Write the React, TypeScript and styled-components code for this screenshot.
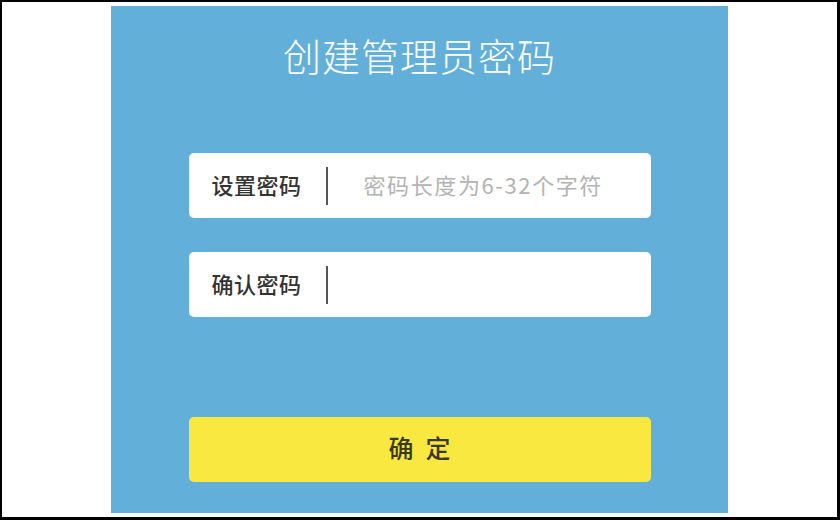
import React from 'react';
import styled, { createGlobalStyle } from 'styled-components';

const GlobalStyle = createGlobalStyle`
  html, body {
    margin: 0;
    padding: 0;
    background: #ffffff;
  }
  body {
    font-family: 'Noto Sans CJK SC', 'Noto Sans', sans-serif;
  }
`;

const Frame = styled.div`
  box-sizing: border-box;
  width: 840px;
  height: 520px;
  border-style: solid;
  border-color: #000000;
  border-width: 2px 3px 3px 2px;
  background: #ffffff;
  display: flex;
  justify-content: center;
  padding-top: 4px;
`;

const Panel = styled.div`
  width: 617px;
  height: 507px;
  background: #62b0d9;
  display: flex;
  flex-direction: column;
  align-items: center;
`;

const Title = styled.h1`
  margin: 26px 0 0;
  height: 46px;
  line-height: 46px;
  font-size: 38px;
  font-weight: 300;
  color: #ffffff;
  letter-spacing: 1px;
`;

const Field = styled.label<{ $top: number }>`
  box-sizing: border-box;
  width: 462px;
  height: 65px;
  margin-top: ${props => props.$top}px;
  background: #ffffff;
  border-radius: 5px;
  display: flex;
  align-items: center;
  padding-left: 23px;
`;

const Label = styled.span`
  font-size: 22px;
  font-weight: 500;
  color: #333333;
  width: 91px;
  flex-shrink: 0;
  letter-spacing: 0.5px;
  margin-bottom: 3px;
`;

const Divider = styled.span`
  width: 2px;
  height: 38px;
  background: #555555;
  margin-left: 23px;
  flex-shrink: 0;
`;

const Input = styled.input`
  flex: 1;
  min-width: 0;
  border: 0;
  outline: none;
  background: transparent;
  margin: 0 0 3px 36px;
  font-family: 'Noto Sans CJK SC', 'Noto Sans', sans-serif;
  font-size: 22px;
  letter-spacing: 1.6px;
  color: #333333;
  padding: 0;

  &::placeholder {
    color: #b3b3b3;
  }
`;

const SubmitButton = styled.button`
  width: 462px;
  height: 65px;
  margin-top: 100px;
  border: 0;
  border-radius: 5px;
  background: #f9e83f;
  color: #3b3a28;
  font-family: 'Noto Sans CJK SC', 'Noto Sans', sans-serif;
  font-size: 25px;
  font-weight: 500;
  letter-spacing: 12px;
  text-indent: 12px;
  padding: 0 0 5px;
  cursor: pointer;
`;

const App: React.FC = () => {
  return (
    <>
      <GlobalStyle />
      <Frame>
        <Panel>
          <Title>创建管理员密码</Title>
          <Field $top={75}>
            <Label>设置密码</Label>
            <Divider />
            <Input type="password" placeholder="密码长度为6-32个字符" />
          </Field>
          <Field $top={34}>
            <Label>确认密码</Label>
            <Divider />
            <Input type="password" />
          </Field>
          <SubmitButton type="button">确定</SubmitButton>
        </Panel>
      </Frame>
    </>
  );
};

export default App;
